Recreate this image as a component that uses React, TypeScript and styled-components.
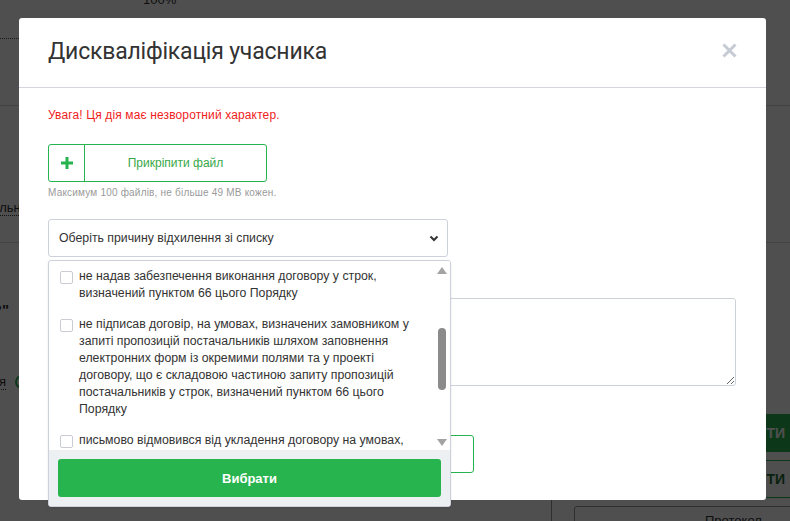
import styled, { createGlobalStyle } from 'styled-components'

const GREEN = '#27b34d'

const GlobalStyle = createGlobalStyle`
  html, body {
    margin: 0;
    padding: 0;
  }
  body {
    width: 790px;
    height: 521px;
    overflow: hidden;
    background: #fff;
    font-family: 'Liberation Sans', Arial, sans-serif;
  }
`

/* ---------- page behind the dialog ---------- */

const Page = styled.div`
  position: relative;
  width: 790px;
  height: 521px;
  overflow: hidden;
  background: #fff;
  color: #333;
  font-size: 13px;
`

const TopBand = styled.div`
  height: 106px;
  box-sizing: border-box;
  border-bottom: 1px solid #d8d8d8;
  display: flex;
  align-items: flex-start;
`

const DottedCell = styled.div`
  width: 135px;
  height: 39px;
  box-sizing: border-box;
  border-bottom: 1px dotted #555;
`

const Percent = styled.span`
  margin: -8px 0 0 8px;
  font-size: 13px;
`

const MidBand = styled.div`
  height: 137px;
  box-sizing: border-box;
  border-bottom: 1px solid #d8d8d8;
  padding-top: 94px;
`

const DottedLink = styled.span`
  display: inline-block;
  border-bottom: 1px dotted #333;
  line-height: 15px;
  white-space: nowrap;
`

/* a text whose end sits at a fixed x and that runs off to the left */
const EndAnchored = styled.div<{ $end: number }>`
  width: ${({ $end }) => $end}px;
  flex: none;
  display: flex;
  justify-content: flex-end;
  white-space: nowrap;
`

const ShiftedLink = styled(DottedLink)`
  margin-left: -62px;
`

const LowerBand = styled.div`
  display: flex;
  height: 279px;
`

const MainCol = styled.div`
  flex: none;
  width: 551px;
  padding-top: 58px;
  display: flex;
  flex-direction: column;
`

const Quote = styled.span`
  font-weight: bold;
  font-size: 15px;
`

const StatusRow = styled.div`
  margin-top: 56px;
  display: flex;
  align-items: center;
  gap: 9px;
`

const StatusDot = styled.span`
  flex: none;
  width: 14px;
  height: 14px;
  box-sizing: border-box;
  border-radius: 50%;
  border: 2px solid ${GREEN};
`

const Aside = styled.div`
  flex: none;
  width: 239px;
  box-sizing: border-box;
  border-left: 1px solid #999;
  padding: 171px 0 0 22px;
  display: flex;
  flex-direction: column;
  gap: 8px;
`

const AsideButton = styled.div<{ $filled?: boolean }>`
  flex: none;
  height: 38px;
  width: 240px;
  box-sizing: border-box;
  display: flex;
  align-items: center;
  justify-content: flex-end;
  padding-right: 28px;
  font-weight: bold;
  font-size: 14px;
  border-radius: 3px;
  background: ${({ $filled }) => ($filled ? GREEN : '#fff')};
  color: ${({ $filled }) => ($filled ? '#fff' : '#1d6b34')};
  border: 1px solid ${GREEN};
`

const AsideBox = styled.div`
  flex: none;
  height: 40px;
  width: 240px;
  box-sizing: border-box;
  border: 1px solid #999;
  border-radius: 3px;
  padding: 6px 0 0 130px;
  font-size: 13px;
`

/* ---------- dialog ---------- */

const Overlay = styled.div`
  position: absolute;
  inset: 0;
  background: rgba(0, 0, 0, 0.69);
`

const Modal = styled.div`
  position: absolute;
  left: 19px;
  top: 18px;
  width: 747px;
  height: 482px;
  background: #fff;
  border-radius: 3px;
  display: flex;
  flex-direction: column;
`

const Header = styled.div`
  height: 70px;
  box-sizing: border-box;
  border-bottom: 1px solid #d3d6dd;
  padding: 0 29px;
  display: flex;
  align-items: center;
  justify-content: space-between;
`

const Title = styled.h2`
  margin: 0 0 2px;
  font-family: Roboto, 'Noto Sans', sans-serif;
  font-weight: 400;
  font-size: 23px;
  color: #333;
  letter-spacing: -0.2px;
`

const CloseButton = styled.button`
  border: 0;
  background: none;
  padding: 0;
  width: 15px;
  height: 15px;
  display: flex;
  margin-bottom: 4px;
`

const Body = styled.div`
  padding: 0 30px 0 29px;
  display: flex;
  flex-direction: column;
  align-items: flex-start;
`

const Warning = styled.div`
  margin-top: 19px;
  font-size: 12px;
  line-height: 16px;
  letter-spacing: 0.13px;
  color: #f01d1d;
`

const AttachButton = styled.button`
  margin-top: 21px;
  width: 219px;
  height: 38px;
  box-sizing: border-box;
  padding: 0;
  display: flex;
  border: 1px solid ${GREEN};
  border-radius: 3px;
  background: #fff;
  font-family: inherit;
`

const PlusCell = styled.span`
  width: 36px;
  height: 100%;
  box-sizing: border-box;
  border-right: 1px solid ${GREEN};
  display: flex;
  align-items: center;
  justify-content: center;
`

const AttachLabel = styled.span`
  flex: 1;
  align-self: center;
  text-align: center;
  font-size: 12px;
  color: #37a849;
`

const Hint = styled.div`
  margin-top: 4px;
  font-size: 10px;
  line-height: 14px;
  letter-spacing: 0.2px;
  color: #9a9a9a;
`

const SelectWrap = styled.div`
  position: relative;
  margin-top: 19px;
`

const SelectBox = styled.div`
  width: 400px;
  height: 38px;
  box-sizing: border-box;
  border: 1px solid #cdd1d9;
  border-radius: 3px;
  padding: 0 8px 0 10px;
  display: flex;
  align-items: center;
  justify-content: space-between;
  font-size: 12.3px;
  color: #333;
`

const Dropdown = styled.div`
  position: absolute;
  left: 0;
  top: 41px;
  width: 403px;
  height: 247px;
  box-sizing: border-box;
  border: 1px solid #cdd1dc;
  border-radius: 3px;
  background: #fff;
  display: flex;
  flex-direction: column;
  overflow: hidden;
  z-index: 2;
  box-shadow: 0 1px 3px rgba(0, 0, 0, 0.08);
`

const OptionList = styled.div`
  position: relative;
  height: 189px;
  overflow: hidden;
`

const Option = styled.label`
  display: flex;
  align-items: flex-start;
  gap: 6px;
  padding: 7px 20px 7px 11px;
  font-size: 12.3px;
  line-height: 17px;
  color: #333;
`

const Checkbox = styled.span`
  flex: none;
  width: 13px;
  height: 13px;
  box-sizing: border-box;
  margin-top: 3px;
  border: 1px solid #c9ccd2;
  border-radius: 2px;
  background: #fff;
`

const ScrollTrack = styled.div`
  position: absolute;
  top: 0;
  right: 0;
  width: 15px;
  height: 100%;
  background: #fff;
`

const Arrow = styled.span<{ $down?: boolean }>`
  position: absolute;
  left: 2px;
  width: 0;
  height: 0;
  border-left: 5px solid transparent;
  border-right: 5px solid transparent;
  ${({ $down }) =>
    $down
      ? 'bottom: 4px; border-top: 7px solid #a3a3a3;'
      : 'top: 6px; border-bottom: 7px solid #a3a3a3;'}
`

const Thumb = styled.span`
  position: absolute;
  left: 3px;
  top: 67px;
  width: 8px;
  height: 62px;
  border-radius: 4px;
  background: #8b8b8b;
`

const DropdownFooter = styled.div`
  flex: 1;
  background: #edf0f3;
  padding: 9px 9px 0;
`

const ChooseButton = styled.button`
  width: 100%;
  height: 38px;
  border: 0;
  border-radius: 3px;
  background: ${GREEN};
  color: #fff;
  font-family: inherit;
  font-weight: bold;
  font-size: 13px;
`

const FieldLabel = styled.div`
  margin-top: 22px;
  font-size: 13px;
  line-height: 17px;
  color: #333;
`

const Comment = styled.textarea`
  margin-top: 2px;
  width: 688px;
  height: 88px;
  box-sizing: border-box;
  border: 1px solid #cdd1d9;
  border-radius: 3px;
  font-family: inherit;
  font-size: 13px;
  resize: vertical;
`

const ButtonRow = styled.div`
  margin-top: 49px;
  display: flex;
  gap: 10px;
`

const ActionButton = styled.button<{ $outline?: boolean }>`
  height: 38px;
  width: ${({ $outline }) => ($outline ? 216 : 200)}px;
  box-sizing: border-box;
  border: 1px solid ${GREEN};
  border-radius: 3px;
  background: ${({ $outline }) => ($outline ? '#fff' : GREEN)};
  color: ${({ $outline }) => ($outline ? '#37a849' : '#fff')};
  font-family: inherit;
  font-size: 13px;
`

const reasons = [
  'не надав забезпечення виконання договору у строк, визначений пунктом 66 цього Порядку',
  'не підписав договір, на умовах, визначених замовником у запиті пропозицій постачальників шляхом заповнення електронних форм із окремими полями та у проекті договору, що є складовою частиною запиту пропозицій постачальників у строк, визначений пунктом 66 цього Порядку',
  'письмово відмовився від укладення договору на умовах, визначених замовником у запиті пропозицій постачальників',
]

export default function App() {
  return (
    <>
      <GlobalStyle />
      <Page>
        <TopBand>
          <DottedCell />
          <Percent>100%</Percent>
        </TopBand>
        <MidBand>
          <ShiftedLink>Функціональні характеристики</ShiftedLink>
        </MidBand>
        <LowerBand>
          <MainCol>
            <EndAnchored $end={9}>
              <Quote>Закупівля "Обладнання?"</Quote>
            </EndAnchored>
            <StatusRow>
              <EndAnchored $end={6}>
                <DottedLink>Кваліфікація</DottedLink>
              </EndAnchored>
              <StatusDot />
            </StatusRow>
          </MainCol>
          <Aside>
            <AsideButton $filled>ПОГОДИТИ</AsideButton>
            <AsideButton>ВІДХИЛИТИ</AsideButton>
            <AsideBox>Протокол</AsideBox>
          </Aside>
        </LowerBand>

        <Overlay />

        <Modal>
          <Header>
            <Title>Дискваліфікація учасника</Title>
            <CloseButton aria-label="Закрити">
              <svg width="15" height="15" viewBox="0 0 15 15">
                <path d="M1.5 1.5 L13.5 13.5 M13.5 1.5 L1.5 13.5" stroke="#c6cbd3" strokeWidth="3" />
              </svg>
            </CloseButton>
          </Header>
          <Body>
            <Warning>Увага! Ця дія має незворотний характер.</Warning>
            <AttachButton>
              <PlusCell>
                <svg width="12" height="12" viewBox="0 0 12 12">
                  <path d="M6 0 V12 M0 6 H12" stroke={GREEN} strokeWidth="3" />
                </svg>
              </PlusCell>
              <AttachLabel>Прикріпити файл</AttachLabel>
            </AttachButton>
            <Hint>Максимум 100 файлів, не більше 49 MB кожен.</Hint>
            <SelectWrap>
              <SelectBox>
                <span>Оберіть причину відхилення зі списку</span>
                <svg width="10" height="7" viewBox="0 0 10 7">
                  <path d="M1.5 1.5 L5 5 L8.5 1.5" fill="none" stroke="#333" strokeWidth="2" />
                </svg>
              </SelectBox>
              <Dropdown>
                <OptionList>
                  {reasons.map((r) => (
                    <Option key={r}>
                      <Checkbox />
                      <span>{r}</span>
                    </Option>
                  ))}
                  <ScrollTrack>
                    <Arrow />
                    <Thumb />
                    <Arrow $down />
                  </ScrollTrack>
                </OptionList>
                <DropdownFooter>
                  <ChooseButton>Вибрати</ChooseButton>
                </DropdownFooter>
              </Dropdown>
            </SelectWrap>
            <FieldLabel>Коментар</FieldLabel>
            <Comment />
            <ButtonRow>
              <ActionButton>Дискваліфікувати</ActionButton>
              <ActionButton $outline>Зберегти зміни в чернетці</ActionButton>
            </ButtonRow>
          </Body>
        </Modal>
      </Page>
    </>
  )
}
